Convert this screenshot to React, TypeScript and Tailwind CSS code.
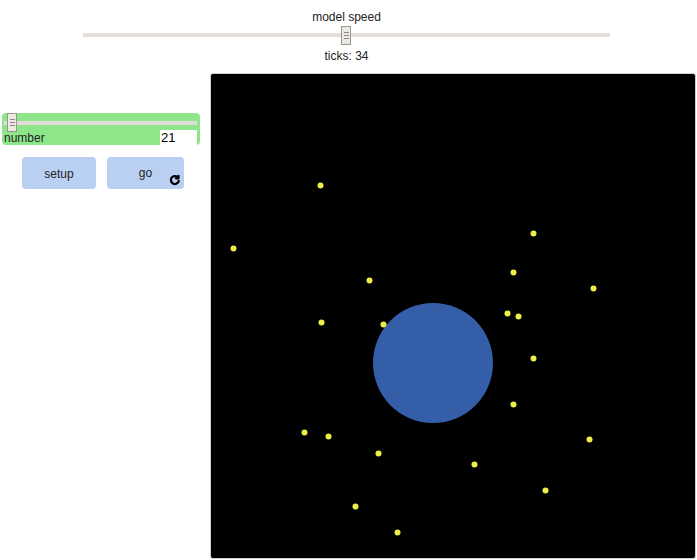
import React from "react";

const dots: [number, number][] = [
  [320, 185], [233, 248], [533, 233], [513, 272], [369, 280], [593, 288],
  [321, 322], [383, 324], [507, 313], [518, 316], [533, 358], [513, 404],
  [304, 432], [328, 436], [378, 453], [589, 439], [474, 464], [545, 490],
  [355, 506], [397, 532],
];

function Thumb({ className }: { className?: string }) {
  return (
    <div className={"flex w-[10px] h-[19px] flex-col items-center justify-center gap-[2px] border border-[#9a9690] bg-[#ece8e2] " + (className ?? "")}>
      <div className="h-px w-[5px] bg-[#8d8a85]" />
      <div className="h-px w-[5px] bg-[#8d8a85]" />
      <div className="h-px w-[5px] bg-[#8d8a85]" />
    </div>
  );
}

export default function App() {
  const ox = 211;
  const oy = 74;
  return (
    <div className="w-[697px] h-[560px] bg-white overflow-hidden text-[#222]" style={{ fontFamily: '"Liberation Sans", Arial, sans-serif' }}>
      {/* top speed slider */}
      <div className="flex flex-col pl-[83px] w-[610px] h-[73px]">
        <div className="pt-[10px] text-[12px] leading-[14px] text-center">model speed</div>
        <div className="relative h-[25px]">
          <div className="absolute left-0 right-0 top-[9px] h-[4px] bg-[#e4dfd8]" />
          <div className="absolute left-[258px] top-[2px]">
            <Thumb />
          </div>
        </div>
        <div className="text-[12px] leading-[14px] text-center">ticks: 34</div>
      </div>
      <div className="flex">
        {/* left controls */}
        <div className="w-[210px] flex flex-col">
          <div className="ml-[2px] mt-[40px] w-[198px] h-[32px] rounded-[4px] bg-[#8ee68a] relative">
            <div className="absolute left-[2px] right-[3px] top-[8px] h-[4px] bg-[#e2ddd5]" />
            <div className="absolute left-[5px] top-0">
              <Thumb />
            </div>
            <div className="absolute left-[2px] top-[18px] text-[12px] leading-[14px]">number</div>
            <div className="absolute left-[158px] top-[17px] w-[37px] h-[15px] bg-white text-[13px] leading-[16px] pl-[1px] text-black">21</div>
          </div>
          <div className="flex mt-[12px] ml-[22px] gap-[11px]">
            <div className="w-[74px] h-[32px] rounded-[4px] bg-[#bad0f2] flex items-center justify-center text-[12px] pt-[1px]">setup</div>
            <div className="relative w-[77px] h-[32px] rounded-[4px] bg-[#bad0f2] flex items-center justify-center text-[12px]">
              go
              <svg className="absolute left-[62px] top-[17px]" width="12" height="12" viewBox="0 0 24 24" fill="none" stroke="#000" strokeWidth="4.5" strokeLinecap="round" strokeLinejoin="round">
                <path d="M19.5 14a8 8 0 1 1-2.5-8" />
                <path d="M19 3.5v5h-5" />
              </svg>
            </div>
          </div>
        </div>
        {/* view */}
        <div className="w-[486px] h-[486px] border border-[#cfcfcf] rounded-[3px] bg-black overflow-hidden">
          <svg width="484" height="484" viewBox="0 0 484 484">
            <circle cx={433 - ox} cy={363 - oy} r={60} fill="#355ea9" />
            {dots.map(([x, y], i) => (
              <circle key={i} cx={x - ox + 0.5} cy={y - oy + 0.5} r={3} fill="#eeee48" />
            ))}
          </svg>
        </div>
      </div>
    </div>
  );
}
